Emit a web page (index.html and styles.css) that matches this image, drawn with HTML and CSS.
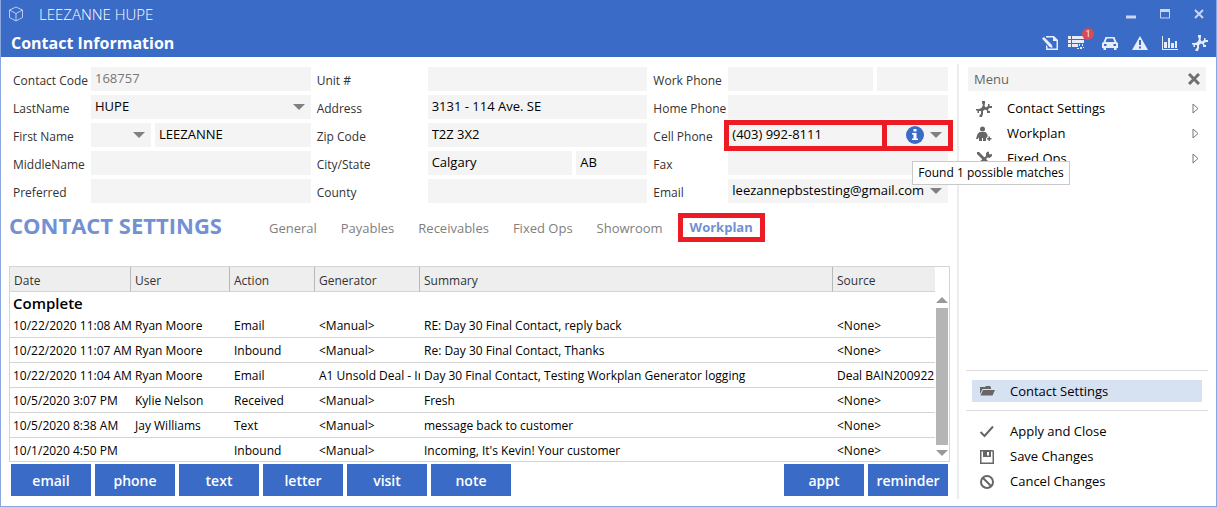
FILE: index.html
```html
<!DOCTYPE html>
<html lang="en">
<head>
  <meta charset="UTF-8">
  <meta name="viewport" content="width=device-width, initial-scale=1">
  <title>Contact Information</title>
  <link rel="stylesheet" href="styles.css">
</head>
<body>

  <!-- shared icon shapes -->
  <svg class="sprite" aria-hidden="true">
    <symbol id="icon-nodes" viewBox="0 0 16 16">
      <path d="M6 0h3v2L8.500 5 10 6.500l2-1.500V3h1.500v2H16v2h-2L12 8l.5 2H14v2h-3V9.500L9 8.500 7 10v3l-1 3H3.500v-2L5 13v-3H3v2H1.500V9.500H0V8h3l2.500-1L7 4 6 2z"/>
    </symbol>
  </svg>

  <div class="window">
    <header class="header">
      <div class="title-bar">
        <svg class="logo" viewBox="0 0 16 16"><path d="M8 1l6.500 3v7.500L8 15l-6.500-3.500V4zM1.500 4L8 7.500 14.500 4M8 7.500V15"/></svg>
        <span class="window-title">LEEZANNE HUPE</span>
        <div class="window-buttons">
          <button type="button" aria-label="Minimize"><svg viewBox="0 0 10 10"><path d="M0 8h10" stroke-width="3"/></svg></button>
          <button type="button" aria-label="Maximize"><svg viewBox="0 0 10 10"><path d="M.5 1v8h9V1"/><path d="M0 1.500h10" stroke-width="3"/></svg></button>
          <button type="button" aria-label="Close"><svg viewBox="0 0 10 10"><path d="M1 1l8 8M9 1L1 9" stroke-width="2"/></svg></button>
        </div>
      </div>
      <div class="page-bar">
        <h1>Contact Information</h1>
        <div class="toolbar">
          <button type="button" aria-label="Edit">
            <svg viewBox="0 0 16 16"><path fill-rule="evenodd" d="M4 1h8l4 4v10H4v-5l1.500 1.500v2H14.500V6H11V2.500H5.500V3L4 2z"/><path d="M0 3.500L2 2l8 8 .5 3-3-1z"/></svg>
          </button>
          <button type="button" class="tasks" aria-label="Tasks">
            <svg viewBox="0 0 16 16"><path d="M0 1h3v3H0zM4 1h12v3H4zM0 5h3v3H0zM4 5h12v3H4zM0 9h3v3H0zM4 9h6v3H4zM11 9h1v2h-1zM14 9h1v2h-1zM9 13h2v1H9zM12 12h2v2h-2zM15 12h1v1h-1z"/></svg>
            <span class="badge">1</span>
          </button>
          <button type="button" aria-label="Vehicles">
            <svg viewBox="0 0 16 16"><path fill-rule="evenodd" d="M3.500 2h9L14.500 7 16 8v5h-1.500v2H12v-2H4v2H1.500v-2H0V8l1.500-1zM5 3.500L3.500 7h9L11 3.500zM2 9v2h2.500V9zM11.500 9v2H14V9z"/></svg>
          </button>
          <button type="button" aria-label="Alerts">
            <svg viewBox="0 0 16 16"><path fill-rule="evenodd" d="M8 1l8 14H0zM7 5v5h2V5zM7 11.500v2h2v-2z"/></svg>
          </button>
          <button type="button" aria-label="Reports">
            <svg viewBox="0 0 16 16"><path d="M0 1h1v13h15v1H0zM2 7h3v6H2zM6 3h2v10H6zM9 8h3v5H9zM13 6h2v7h-2z"/></svg>
          </button>
          <button type="button" aria-label="Links"><svg><use href="#icon-nodes"/></svg></button>
        </div>
      </div>
    </header>

    <div class="body">
      <main class="main">
        <form class="contact-form">
          <label for="code">Contact Code</label>
          <input id="code" class="field" type="text" value="168757" disabled>
          <label for="unit">Unit #</label>
          <input id="unit" class="field" type="text">
          <label for="work">Work Phone</label>
          <div class="split">
            <input id="work" class="field" type="text">
            <input class="field" type="text" aria-label="Work extension">
          </div>

          <label for="last">LastName</label>
          <select id="last" class="field"><option>HUPE</option></select>
          <label for="address">Address</label>
          <input id="address" class="field" type="text" value="3131 - 114 Ave. SE">
          <label for="home">Home Phone</label>
          <input id="home" class="field" type="text">

          <label for="first">First Name</label>
          <div class="split name">
            <select class="field" aria-label="Title"><option></option></select>
            <input id="first" class="field" type="text" value="LEEZANNE">
          </div>
          <label for="zip">Zip Code</label>
          <input id="zip" class="field" type="text" value="T2Z 3X2">
          <label for="cell">Cell Phone</label>
          <div class="phone">
            <input id="cell" class="field" type="text" value="(403) 992-8111">
            <button type="button" class="info" aria-label="Possible matches">
              <svg viewBox="0 0 18 18"><circle cx="9" cy="9" r="9"/><path d="M7.500 3h3v2.500h-3zM6 7h4.500v5.500H12V14H6v-1.500h1.500v-4H6z"/></svg>
            </button>
            <button type="button" class="drop" aria-label="More numbers"></button>
            <div class="mark"><span></span><span></span></div>
            <div class="tooltip" role="tooltip">Found 1 possible matches</div>
          </div>

          <label for="middle">MiddleName</label>
          <input id="middle" class="field" type="text">
          <label for="city">City/State</label>
          <div class="split">
            <input id="city" class="field" type="text" value="Calgary">
            <input class="field" type="text" value="AB" aria-label="State">
          </div>
          <label for="fax">Fax</label>
          <input id="fax" class="field" type="text">

          <label for="preferred">Preferred</label>
          <input id="preferred" class="field" type="text">
          <label for="county">County</label>
          <input id="county" class="field" type="text">
          <label for="email">Email</label>
          <select id="email" class="field"><option>leezannepbstesting@gmail.com</option></select>
        </form>

        <div class="section-head">
          <h2>CONTACT SETTINGS</h2>
          <nav class="tabs">
            <a href="#general">General</a>
            <a href="#payables">Payables</a>
            <a href="#receivables">Receivables</a>
            <a href="#fixedops">Fixed Ops</a>
            <a href="#showroom">Showroom</a>
            <a href="#workplan" class="active">Workplan</a>
          </nav>
        </div>

        <div class="grid">
          <table>
            <colgroup>
              <col class="c-date"><col class="c-user"><col class="c-action"><col class="c-generator"><col><col class="c-source">
            </colgroup>
            <thead>
              <tr><th>Date</th><th>User</th><th>Action</th><th>Generator</th><th>Summary</th><th>Source</th></tr>
            </thead>
            <tbody>
              <tr class="group"><td colspan="6">Complete</td></tr>
              <tr><td>10/22/2020 11:08 AM</td><td>Ryan Moore</td><td>Email</td><td>&lt;Manual&gt;</td><td>RE: Day 30 Final Contact, reply back</td><td>&lt;None&gt;</td></tr>
              <tr><td>10/22/2020 11:07 AM</td><td>Ryan Moore</td><td>Inbound</td><td>&lt;Manual&gt;</td><td>Re: Day 30 Final Contact, Thanks</td><td>&lt;None&gt;</td></tr>
              <tr><td>10/22/2020 11:04 AM</td><td>Ryan Moore</td><td>Email</td><td>A1 Unsold Deal - In</td><td>Day 30 Final Contact, Testing Workplan Generator logging</td><td>Deal BAIN200922</td></tr>
              <tr><td>10/5/2020 3:07 PM</td><td>Kylie Nelson</td><td>Received</td><td>&lt;Manual&gt;</td><td>Fresh</td><td>&lt;None&gt;</td></tr>
              <tr><td>10/5/2020 8:38 AM</td><td>Jay Williams</td><td>Text</td><td>&lt;Manual&gt;</td><td>message back to customer</td><td>&lt;None&gt;</td></tr>
              <tr><td>10/1/2020 4:50 PM</td><td></td><td>Inbound</td><td>&lt;Manual&gt;</td><td>Incoming, It's Kevin! Your customer</td><td>&lt;None&gt;</td></tr>
            </tbody>
          </table>
          <div class="scrollbar">
            <span class="arrow up"></span>
            <span class="thumb"></span>
            <span class="arrow down"></span>
          </div>
        </div>

        <div class="actions">
          <button type="button">email</button>
          <button type="button">phone</button>
          <button type="button">text</button>
          <button type="button">letter</button>
          <button type="button">visit</button>
          <button type="button">note</button>
          <button type="button" class="push">appt</button>
          <button type="button">reminder</button>
        </div>
      </main>

      <aside class="side">
        <div class="menu-head">
          <span>Menu</span>
          <button type="button" aria-label="Close menu"><svg viewBox="0 0 12 12"><path d="M1 1l10 10M11 1L1 11"/></svg></button>
        </div>
        <nav class="menu">
          <a href="#contact-settings"><svg class="icon"><use href="#icon-nodes"/></svg>Contact Settings<svg class="chevron" viewBox="0 0 7 11"><path d="M1 1v9l5-4.500z"/></svg></a>
          <a href="#workplan"><svg class="icon" viewBox="0 0 16 16"><circle cx="6.500" cy="3" r="2.500"/><path d="M3.500 6h6l2 2.500V11l-1.500 1v3H7v-3H6v3H3v-4l-1 2H0l1.500-5z"/><path d="M12.500 10.500H14V12h1.500v1.500H14V15h-1.500v-1.500H11V12h1.500z"/></svg>Workplan<svg class="chevron" viewBox="0 0 7 11"><path d="M1 1v9l5-4.500z"/></svg></a>
          <a href="#fixed-ops"><svg class="icon" viewBox="0 0 16 16"><path d="M1 1h2l10 10 2.500 2.500-2 2L11 13 1 3z"/><path d="M11 1l2-.5V3l2 .5 1-1V5l-2.500 2-2-.500L4 14l-2 1.500L.5 14 2 12l8-7V2.500z"/></svg>Fixed Ops<svg class="chevron" viewBox="0 0 7 11"><path d="M1 1v9l5-4.500z"/></svg></a>
        </nav>

        <div class="current">
          <a href="#contact-settings"><svg class="icon" viewBox="0 0 16 16"><path d="M1 4h5l1-1h4l1 1.500V6H3.500L1 11z"/><path d="M4 7h12l-2.500 5.500H1.500z"/></svg>Contact Settings</a>
        </div>
        <div class="commands">
          <button type="button"><svg class="icon" viewBox="0 0 16 16"><path class="stroke" d="M1.500 8l4 4L14 2.500"/></svg>Apply and Close</button>
          <button type="button"><svg class="icon" viewBox="0 0 16 16"><path fill-rule="evenodd" d="M1 1h13l1 1v13H1zM2.500 2.500v11h11v-11H12V8H4V2.500zM8 3v3.500h2V3z"/></svg>Save Changes</button>
          <button type="button"><svg class="icon" viewBox="0 0 16 16"><circle class="stroke" cx="8" cy="8" r="6"/><path class="stroke" d="M4 4l8 8"/></svg>Cancel Changes</button>
        </div>
      </aside>
    </div>
  </div>

</body>
</html>
```
FILE: styles.css
```css
* {
  box-sizing: border-box;
}

body {
  margin: 0;
  font-family: "Open Sans", "Noto Sans", sans-serif;
  font-size: 12px;
  color: #000;
  background-color: #fff;
}

button {
  font-family: inherit;
  padding: 0;
  border: none;
  background: none;
  cursor: pointer;
}

a {
  color: inherit;
  text-decoration: none;
}

svg {
  display: block;
}

.sprite {
  display: none;
}

.window {
  display: flex;
  flex-direction: column;
  min-height: 100vh;
  border: 1px solid #8aa6de;
  border-top: none;
}

/* header */
.header {
  background-color: #3a6bc7;
  color: #fff;
}

.title-bar {
  display: flex;
  align-items: center;
  height: 28px;
  padding: 0 12px 0 7px;
}

.logo {
  width: 16px;
  height: 16px;
  fill: none;
  stroke: #bccdee;
}

.window-title {
  margin-left: 15px;
  font-size: 15px;
  font-weight: 300;
  color: #fff;
}

.window-buttons {
  display: flex;
  gap: 24px;
  margin-left: auto;
}

.window-buttons svg {
  width: 10px;
  height: 10px;
  fill: none;
  stroke: #c8d6f0;
}

.page-bar {
  display: flex;
  align-items: center;
  height: 29px;
  padding: 0 8px 0 10px;
}

h1 {
  margin: 0;
  font-size: 16px;
  font-weight: 700;
}

.toolbar {
  display: flex;
  gap: 14px;
  margin-left: auto;
}

.toolbar svg {
  width: 16px;
  height: 16px;
  fill: #e6edf9;
}

.tasks {
  position: relative;
  margin-left: -4px;
  margin-right: 4px;
}

.badge {
  position: absolute;
  top: -7px;
  right: -10px;
  width: 12px;
  height: 12px;
  border-radius: 50%;
  background-color: #d64a5c;
  color: #fff;
  font-size: 9px;
  line-height: 12px;
}

/* layout */
.body {
  display: flex;
  flex: 1;
  padding: 7px 8px;
}

.main {
  display: flex;
  flex-direction: column;
  flex: 1;
  min-width: 0;
  padding: 3px 7px 3px 0;
  border-right: 2px solid #ececef;
}

.side {
  display: flex;
  flex-direction: column;
  width: 249px;
  padding: 3px 0 0 7px;
}

/* contact form */
.contact-form {
  display: grid;
  grid-template-columns: 82px 1fr 117px 1fr 81px 1fr;
  grid-auto-rows: 24px;
  row-gap: 4px;
  margin-right: 2px;
}

.contact-form label {
  padding: 2px 0 0 6px;
  line-height: 24px;
  color: #333;
  white-space: nowrap;
}

.contact-form label:nth-of-type(3n+1) {
  padding-left: 4px;
}

.field {
  width: 100%;
  min-width: 0;
  height: 24px;
  padding: 0 4px 2px;
  border: none;
  border-radius: 0;
  background-color: #f4f4f4;
  color: #000;
  font-family: inherit;
  font-size: 13px;
  appearance: none;
}

.field:disabled {
  color: #777;
}

select.field {
  padding-right: 20px;
}

select.field,
.drop {
  background-image: url("data:image/svg+xml,%3Csvg xmlns='http://www.w3.org/2000/svg' width='12' height='6'%3E%3Cpath d='M0 0h12L6 6z' fill='%23808080'/%3E%3C/svg%3E");
  background-repeat: no-repeat;
  background-position: right 6px center;
}

.split {
  display: grid;
  grid-template-columns: 1fr 71px;
  gap: 4px;
}

.split.name {
  grid-template-columns: 60px 1fr;
}

.phone {
  position: relative;
  display: flex;
  align-items: center;
  background-color: #f4f4f4;
}

.phone .field {
  flex: 1;
}

.info svg {
  width: 18px;
  height: 18px;
}

.info circle {
  fill: #3a6bc7;
}

.info path {
  fill: #fff;
}

.drop {
  width: 24px;
  height: 24px;
}

/* red highlight frames */
.mark {
  position: absolute;
  inset: -3px -5px -4px -4px;
  display: flex;
  pointer-events: none;
}

.mark span {
  border: 5px solid #ed1c24;
}

.mark span:first-child {
  flex: 1;
}

.mark span:last-child {
  width: 71px;
  margin-left: -5px;
}

.tooltip {
  position: absolute;
  top: 38px;
  left: 184px;
  z-index: 1;
  padding: 0 5px;
  border: 1px solid #c9c9c9;
  background-color: #fff;
  line-height: 22px;
  white-space: nowrap;
}

/* section heading and tabs */
.section-head {
  display: flex;
  align-items: center;
  height: 29px;
  margin: 10px 0 24px;
}

h2 {
  margin: 0;
  padding-bottom: 6px;
  font-size: 22px;
  line-height: 24px;
  font-weight: 700;
  color: #7191d3;
  white-space: nowrap;
}

.tabs {
  display: flex;
  align-items: center;
  gap: 24px;
  margin-left: 47px;
  font-size: 13px;
  color: #808080;
}

.tabs a {
  white-space: nowrap;
}

.tabs .active {
  margin-left: -9px;
  padding: 0 7px;
  border: 5px solid #ed1c24;
  line-height: 19px;
  font-weight: 700;
  color: #7191d3;
}

/* history grid */
.grid {
  display: flex;
  flex: 1;
  border: 1px solid #d4d4d4;
}

table {
  flex: 1;
  min-width: 0;
  width: 100%;
  table-layout: fixed;
  border-collapse: separate;
  border-spacing: 0;
}

.c-date {
  width: 121px;
}

.c-user {
  width: 99px;
}

.c-action {
  width: 85px;
}

.c-generator {
  width: 105px;
}

.c-source {
  width: 102px;
}

th,
td {
  height: 25px;
  padding: 1px 0 0 4px;
  border-bottom: 1px solid #d4d4d4;
  text-align: left;
  white-space: nowrap;
  overflow: hidden;
}

td:first-child {
  padding-left: 3px;
  overflow: visible;
}

th {
  padding-top: 2px;
  border-right: 1px solid #b8b8b8;
  background-color: #eee;
  font-weight: 400;
  color: #333;
}

th:last-child {
  border-right: none;
}

.group td {
  height: 21px;
  border-bottom: none;
  font-size: 15px;
  line-height: 19px;
  font-weight: 600;
}

tbody tr:last-child td {
  height: 23px;
  border-bottom: none;
}

.scrollbar {
  display: flex;
  flex-direction: column;
  align-items: center;
  gap: 5px;
  width: 14px;
  padding: 30px 1px 5px;
}

.arrow {
  border: 6px solid transparent;
}

.arrow.up {
  border-top: none;
  border-bottom-color: #999;
}

.arrow.down {
  border-bottom: none;
  border-top-color: #999;
}

.thumb {
  flex: 1;
  width: 12px;
  background-color: #b5b5b5;
}

.actions {
  display: flex;
  gap: 4px;
  margin: 2px 2px 0;
}

.actions button {
  width: 80px;
  height: 32px;
  background-color: #3a6bc7;
  color: #fff;
  font-size: 14px;
  font-weight: 600;
}

.actions .push {
  margin-left: auto;
}

/* side menu */
.menu-head {
  display: flex;
  align-items: center;
  justify-content: space-between;
  height: 24px;
  margin: 0 2px 5px;
  padding: 0 6px;
  background-color: #f4f4f4;
  font-size: 13px;
  color: #666;
}

.menu-head svg {
  width: 12px;
  height: 12px;
  stroke: #707070;
  stroke-width: 3;
}

.menu a,
.current a,
.commands button {
  display: flex;
  align-items: center;
  gap: 15px;
  font-size: 13px;
  line-height: 25px;
  color: #000;
}

.menu a {
  padding: 0 9px 0 10px;
}

.icon {
  width: 16px;
  height: 16px;
  fill: #666;
}

.icon .stroke {
  fill: none;
  stroke: #666;
  stroke-width: 2;
}

.chevron {
  width: 7px;
  height: 11px;
  margin-left: auto;
  fill: none;
  stroke: #777;
}

.current {
  margin-top: auto;
  padding: 9px 6px 8px;
  border: solid #dcdcdc;
  border-width: 1px 0;
}

.current a {
  padding-left: 7px;
  background-color: #d6e1f2;
  line-height: 22px;
}

.commands {
  padding: 8px 13px 5px;
}
```
